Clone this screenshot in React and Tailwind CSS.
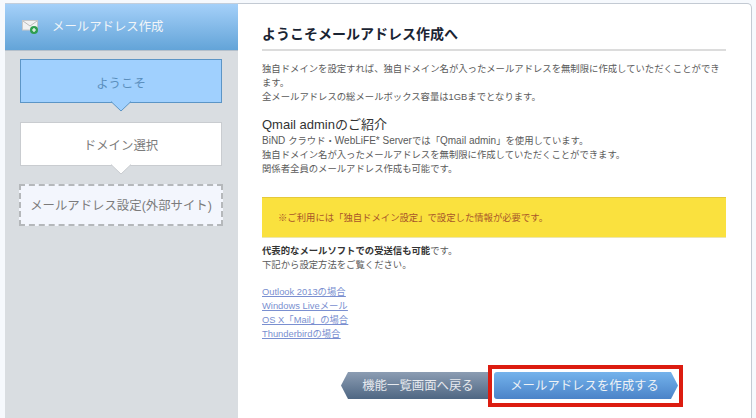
const jp = { fontFamily: '"Liberation Sans","Noto Sans CJK JP",sans-serif' };

function Mail() {
  return (
    <svg width="17" height="14" viewBox="0 0 17 14" className="shrink-0">
      <rect x="0.5" y="0.5" width="15" height="9.5" fill="#f2f2f2" stroke="#c8c8c8" />
      <path d="M1 1l7 5 7-5" fill="none" stroke="#bbb" />
      <circle cx="12" cy="10" r="4" fill="#2f9e4f" />
      <path d="M12 8v4M10 10h4" stroke="#fff" strokeWidth="1.2" />
    </svg>
  );
}

function Step({ cls, tip, children }) {
  return (
    <div className={`relative flex items-center justify-center whitespace-nowrap text-[12.4px] ${cls}`}>
      {children}
      {tip}
    </div>
  );
}

function Tip({ fill, stroke }) {
  return (
    <svg width="20" height="11" viewBox="0 0 20 11" className="absolute left-1/2 top-full -ml-[10px] -mt-px">
      <path d="M0 0.5L10 10L20 0.5" fill={fill} stroke={stroke} />
      <path d="M1 0H19V0.6H1Z" fill={fill} />
    </svg>
  );
}

export default function App() {
  return (
    <div style={jp} className="w-[756px] h-[418px] overflow-hidden bg-[#f6f9fd] pl-[5px] pt-[3px] pr-[4px] flex">
      <aside className="w-[233px] shrink-0 bg-[#d9dde1] border-t border-[#c3cedb] flex flex-col">
        <div className="h-[47px] shrink-0 flex items-center pl-[17px] gap-[13px] bg-gradient-to-b from-[#a4d0f9] to-[#63a4d8] border-b border-[#b4c0cc] text-[12.4px] text-[#f1f5f8]">
          <Mail />
          <span>メールアドレス作成</span>
        </div>
        <div className="flex flex-col pl-[15px] pt-[8px]">
          <Step
            cls="w-[202px] h-[44px] pt-[6px] bg-[#a0d0fe] border border-[#5c95c6] text-[#5b8fbd]"
            tip={<Tip fill="#a0d0fe" stroke="#5c95c6" />}
          >
            ようこそ
          </Step>
          <Step
            cls="w-[202px] h-[44px] pt-[5px] mt-[19px] bg-white border border-[#c9ccd0] text-[#7b7b7b]"
            tip={<Tip fill="#ffffff" stroke="#c9ccd0" />}
          >
            ドメイン選択
          </Step>
          <Step cls="w-[204px] h-[42px] pt-[3px] mt-[18px] -ml-px bg-[#f3f6fd] border-2 border-dashed border-[#b5b8bb] text-[#7b7b7b]">
            メールアドレス設定(外部サイト)
          </Step>
        </div>
      </aside>
      <main className="flex-1 bg-white border-t border-r border-[#c3cad3] rounded-tr-[5px] pl-[24px] pr-[25px] flex flex-col text-[9.35px] leading-[14px] text-[#5a5a5a]">
        <h1 className="mt-[20px] h-[27px] border-b-2 border-[#dcdcdc] text-[14px] leading-[20px] font-bold text-[#1a2433]">
          ようこそメールアドレス作成へ
        </h1>
        <p className="mt-[11px]">
          独自ドメインを設定すれば、独自ドメイン名が入ったメールアドレスを無制限に作成していただくことができます。
          <br />
          全メールアドレスの総メールボックス容量は1GBまでとなります。
        </p>
        <h2 className="mt-[13px] text-[13px] leading-[16px] text-[#333]">Qmail adminのご紹介</h2>
        <p className="mt-[1px]">
          <span className="text-[10px]">BiND </span>クラウド・<span className="text-[10px]">WebLiFE* Server</span>では「<span className="text-[10px]">Qmail admin</span>」を使用しています。
          <br />
          独自ドメイン名が入ったメールアドレスを無制限に作成していただくことができます。
          <br />
          関係者全員のメールアドレス作成も可能です。
        </p>
        <div className="mt-[21px] h-[41px] shrink-0 flex items-center pl-[16px] bg-[#fae13e] border-t border-[#e5c93a] border-b border-b-[#ece6b0] text-[#a8552a]">
          ※ご利用には「独自ドメイン設定」で設定した情報が必要です。
        </div>
        <p className="mt-[6px]">
          <span className="font-bold text-[#333]">代表的なメールソフトでの受送信も可能</span>です。
          <br />
          下記から設定方法をご覧ください。
        </p>
        <div className="mt-[13px] flex flex-col items-start text-[#7a8fd0] underline">
          <a>Outlook 2013の場合</a>
          <a>Windows Liveメール</a>
          <a>OS X「Mail」の場合</a>
          <a>Thunderbirdの場合</a>
        </div>
        <div className="mt-[27px] flex items-start pl-[79px]">
          <button
            className="h-[27px] w-[147px] mt-[4px] pl-[7px] pt-[1px] text-[12.4px] text-[#e6e9ee] bg-gradient-to-b from-[#8c9db3] to-[#4f6783] [clip-path:polygon(7px_0,100%_0,100%_100%,7px_100%,0_50%)]"
            style={jp}
          >
            機能一覧画面へ戻る
          </button>
          <div className="border-[4px] border-[#dc1c10] px-[2px] pt-[3px] -mt-[3px] h-[42px] w-[195px] bg-white">
            <button
              className="h-[27px] w-[184px] pr-[3px] pt-[1px] text-[12.4px] text-[#eef2f6] rounded-l-[3px] bg-gradient-to-b from-[#74b3ec] to-[#4b83c8] [clip-path:polygon(0_0,calc(100%-7px)_0,100%_50%,calc(100%-7px)_100%,0_100%)]"
              style={jp}
            >
              メールアドレスを作成する
            </button>
          </div>
        </div>
      </main>
    </div>
  );
}
